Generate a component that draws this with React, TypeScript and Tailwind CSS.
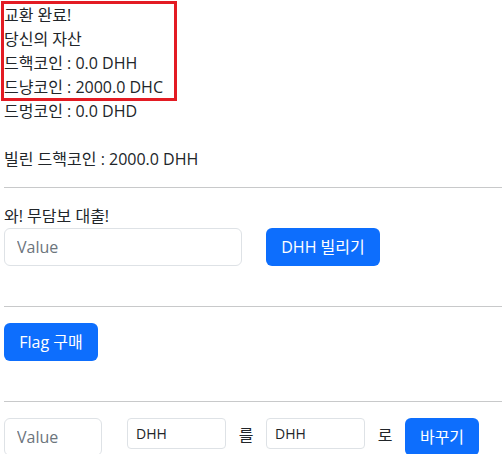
import React from 'react';

const font = { fontFamily: '"Open Sans", "Noto Sans CJK KR", sans-serif' };

function Hr() {
  return <hr className="my-4 border-0 border-t border-[#c8c9ca]" />;
}

function PrimaryButton({ children, className = '' }: { children: React.ReactNode; className?: string }) {
  return (
    <button className={`h-[38px] rounded-[6px] bg-[#0d6efd] px-3 text-[16px] leading-6 text-white ${className}`}>
      {children}
    </button>
  );
}

export default function App() {
  return (
    <div className="relative min-h-screen overflow-hidden bg-white pl-1 pt-[3px] text-[16px] leading-6 text-[#212529]" style={font}>
      {/* highlight around the exchange result */}
      <div className="pointer-events-none absolute left-[1px] top-[1px] h-[100px] w-[176px] border-[3px] border-[#e31b23]" />

      <div>교환 완료!</div>
      <div>당신의 자산</div>
      <div>드핵코인 : 0.0 DHH</div>
      <div>드냥코인 : 2000.0 DHC</div>
      <div>드멍코인 : 0.0 DHD</div>
      <div className="h-6" />
      <div>빌린 드핵코인 : 2000.0 DHH</div>
      <Hr />

      <div>와! 무담보 대출!</div>
      <div className="flex items-start">
        <input
          placeholder="Value"
          className="h-[38px] w-[238px] rounded-[6px] border border-[#dee2e6] px-3 text-[16px] leading-6 outline-none placeholder:text-[#6c757d]"
        />
        <PrimaryButton className="ml-6 w-[114px]">DHH 빌리기</PrimaryButton>
      </div>
      <div className="h-6" />
      <Hr />

      <div className="flex">
        <PrimaryButton className="w-[94px]">Flag 구매</PrimaryButton>
      </div>
      <div className="h-6" />
      <Hr />

      <div className="flex items-start">
        <input
          placeholder="Value"
          className="h-[38px] w-[98px] rounded-[6px] border border-[#dee2e6] px-3 text-[16px] leading-6 outline-none placeholder:text-[#6c757d]"
        />
        <input
          readOnly
          defaultValue="DHH"
          className="ml-[25px] h-[31px] w-[99px] rounded-[4px] border border-[#dee2e6] px-2 text-[14px] leading-[21px] text-[#212529] outline-none"
        />
        <span className="mx-3 mt-[5px] w-4 text-center">를</span>
        <input
          readOnly
          defaultValue="DHH"
          className="h-[31px] w-[99px] rounded-[4px] border border-[#dee2e6] px-2 text-[14px] leading-[21px] text-[#212529] outline-none"
        />
        <span className="mx-3 mt-[5px] w-4 text-center">로</span>
        <PrimaryButton className="w-[74px]">바꾸기</PrimaryButton>
      </div>
    </div>
  );
}
